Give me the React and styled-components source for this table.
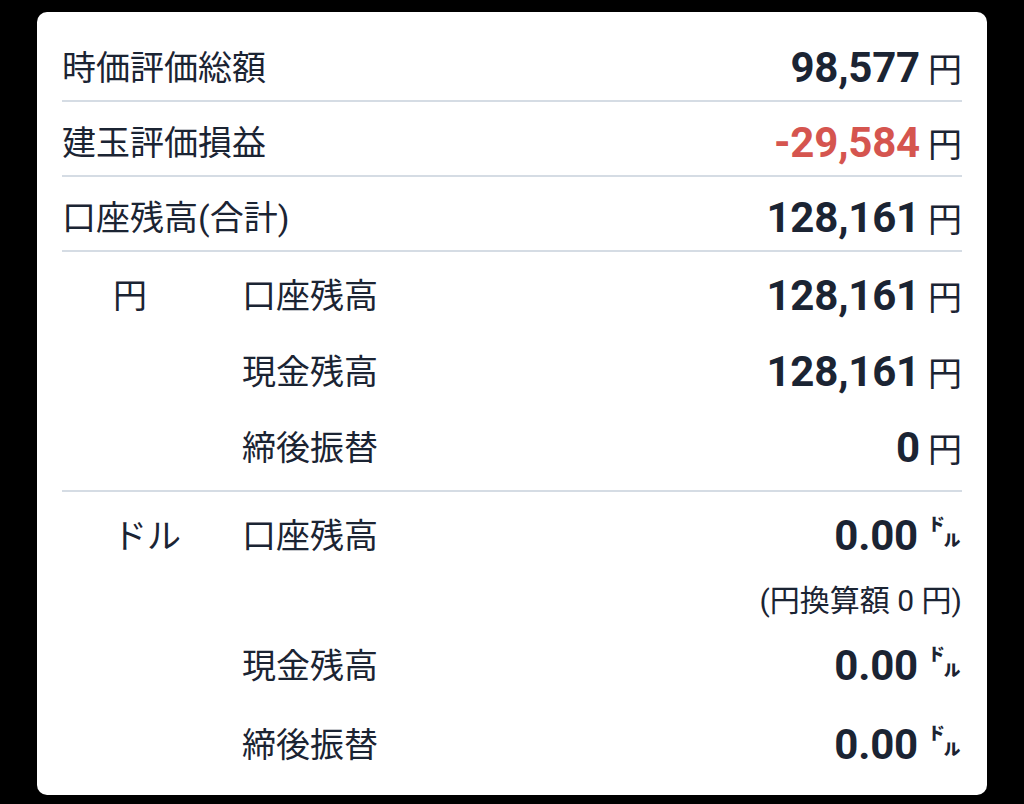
import styled, { createGlobalStyle } from 'styled-components';

const GlobalStyle = createGlobalStyle`
    html, body {
        margin: 0;
        padding: 0;
        background: #000;
    }
    body {
        font-family: Roboto, "Noto Sans CJK JP", sans-serif;
        color: #1b2433;
    }
`

const Page = styled.div`
    padding-top: 12px;
    height: 804px;
    box-sizing: border-box;
`

const Card = styled.div`
    width: 950px;
    margin: 0 auto;
    background: #fff;
    border-radius: 10px;
    padding: 15px 25px;
    box-sizing: border-box;
    height: 783px;
`

const Row = styled.div`
    display: flex;
    align-items: center;
    justify-content: space-between;
    height: 73px;
    padding-top: 9px;
    box-sizing: border-box;
`

const Divider = styled.div`
    height: 2px;
    background: #d5dce4;
`

const Label = styled.span`
    font-family: Roboto, "Noto Sans CJK JP", sans-serif;
    font-size: 34px;
    line-height: 1;
    font-weight: 400;
`

const Value = styled.div`
    display: flex;
    align-items: baseline;
`

const Amount = styled.span`
    font-family: Roboto, sans-serif;
    font-weight: 700;
    font-size: 42px;
    line-height: 1;
    letter-spacing: -0.2px;
    color: ${p => (p.$negative ? '#d5554f' : '#1b2433')};
`

const Unit = styled.span`
    font-family: "Noto Sans CJK JP", sans-serif;
    font-size: ${p => (p.$small ? '34px' : '34px')};
    font-weight: ${p => (p.$small ? 700 : 400)};
    line-height: 1;
    margin-left: ${p => (p.$small ? '10px' : '8px')};
    align-self: ${p => (p.$small ? 'flex-start' : 'auto')};
    margin-top: ${p => (p.$small ? '-1px' : '0')};
`

const Section = styled.div`
    padding-top: 6px;
    padding-bottom: ${p => p.$bottom}px;
`

const SubRow = styled.div`
    display: grid;
    grid-template-columns: 180px 1fr auto;
    align-items: center;
    height: ${p => p.$h || 76}px;
`

const Category = styled(Label)`
    padding-left: 51px;
`

const Note = styled.span`
    grid-column: 3;
    font-family: Roboto, "Noto Sans CJK JP", sans-serif;
    font-size: 30px;
    line-height: 1;
`

function Amt({ value, unit, negative }) {
    const dollar = unit === '㌦'
    return (
        <Value>
            <Amount $negative={negative}>{value}</Amount>
            <Unit $small={dollar}>{unit}</Unit>
        </Value>
    )
}

const summary = [
    { label: '時価評価総額', value: '98,577' },
    { label: '建玉評価損益', value: '-29,584', negative: true },
    { label: '口座残高(合計)', value: '128,161' },
]

export default function App() {
    return (
        <Page>
            <GlobalStyle />
            <Card>
                {summary.map(s => (
                    <div key={s.label}>
                        <Row>
                            <Label>{s.label}</Label>
                            <Amt value={s.value} unit="円" negative={s.negative} />
                        </Row>
                        <Divider />
                    </div>
                ))}

                <Section $bottom={4}>
                    <SubRow>
                        <Category>円</Category>
                        <Label>口座残高</Label>
                        <Amt value="128,161" unit="円" />
                    </SubRow>
                    <SubRow>
                        <span />
                        <Label>現金残高</Label>
                        <Amt value="128,161" unit="円" />
                    </SubRow>
                    <SubRow>
                        <span />
                        <Label>締後振替</Label>
                        <Amt value="0" unit="円" />
                    </SubRow>
                </Section>
                <Divider />

                <Section $bottom={0}>
                    <SubRow>
                        <Category>ドル</Category>
                        <Label>口座残高</Label>
                        <Amt value="0.00" unit="㌦" />
                    </SubRow>
                    <SubRow $h={54}>
                        <Note>(円換算額 0 円)</Note>
                    </SubRow>
                    <SubRow>
                        <span />
                        <Label>現金残高</Label>
                        <Amt value="0.00" unit="㌦" />
                    </SubRow>
                    <SubRow $h={82}>
                        <span />
                        <Label>締後振替</Label>
                        <Amt value="0.00" unit="㌦" />
                    </SubRow>
                </Section>
            </Card>
        </Page>
    )
}
